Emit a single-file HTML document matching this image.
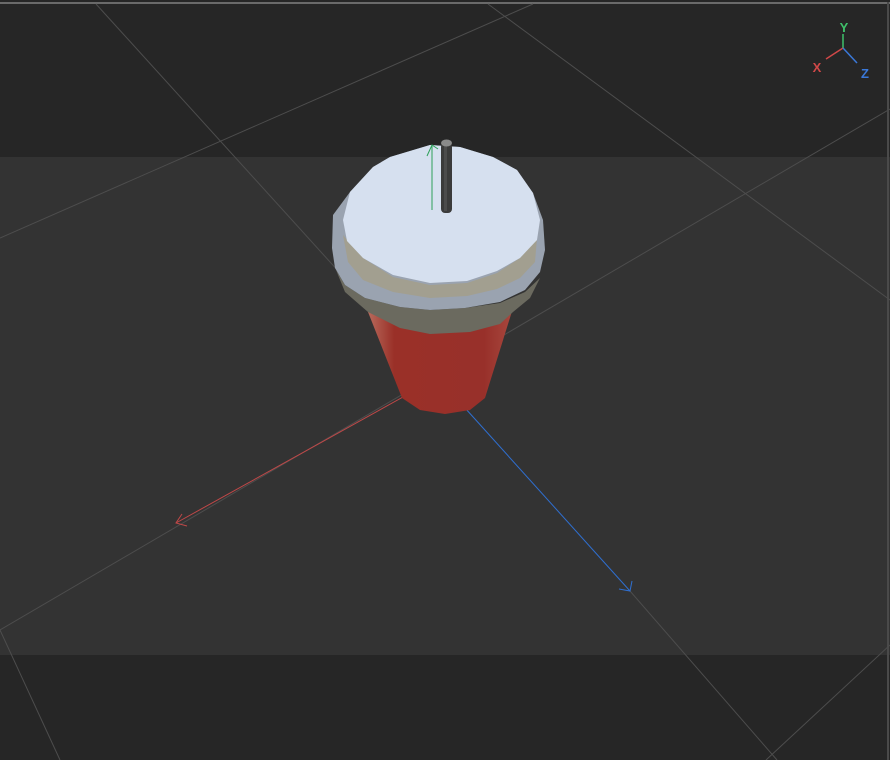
<!DOCTYPE html>
<html><head><style>
html,body{margin:0;padding:0;width:890px;height:760px;overflow:hidden;background:#262626}
svg{display:block}
</style></head><body>
<svg width="890" height="760" xmlns="http://www.w3.org/2000/svg">
<defs>
<linearGradient id="cupg" x1="0" x2="1" y1="0" y2="0">
<stop offset="0" stop-color="#b86a5c"/>
<stop offset="0.18" stop-color="#9a3028"/>
<stop offset="0.8" stop-color="#98302a"/>
<stop offset="1" stop-color="#a8483e"/>
</linearGradient>
</defs>
<rect width="890" height="760" fill="#262626"/>
<rect x="0" y="157" width="890" height="498" fill="#333333"/>
<rect x="0" y="2" width="890" height="2" fill="#6a6a6a"/>
<rect x="887" y="2" width="2" height="758" fill="#4a4a4a"/>
<g stroke="#4d4d4d" stroke-width="1" fill="none">
<line x1="96" y1="4" x2="360" y2="295"/>
<line x1="0" y1="238" x2="533" y2="4"/>
<line x1="488" y1="4" x2="890" y2="300"/>
<line x1="0" y1="630" x2="890" y2="109"/>
<line x1="630" y1="591" x2="777" y2="760"/>
<line x1="0" y1="630" x2="60" y2="760"/>
<line x1="890" y1="645" x2="766" y2="760"/>
</g>
<line x1="403" y1="397" x2="176" y2="523" stroke="#c04848" stroke-width="1"/>
<polyline points="182,514 176,523 187,526" stroke="#c04848" fill="none"/>
<line x1="465" y1="408" x2="630" y2="591" stroke="#2f6fd0" stroke-width="1"/>
<polyline points="619,589 630,591 632,581" stroke="#2f6fd0" fill="none"/>
<!-- cup -->
<polygon points="368,312 513,308 485,398 470,410 445,414 420,410 402,398" fill="url(#cupg)"/>
<polygon points="336,270 345,292 368,312 400,328 430,334 470,332 500,324 513,312 530,298 540,278 525,292 500,303 465,308 430,310 400,307 365,298 345,285" fill="#6b6a5f"/>
<polygon points="333,215 350,192 373,167 390,157 430,145 460,147 493,157 517,170 533,193 543,220 545,250 540,272 525,290 500,302 465,308 430,310 400,307 365,298 345,285 335,268 332,248" fill="#9aa3b0"/>
<polygon points="343,235 363,258 393,277 430,285 467,283 497,273 520,258 537,238 535,262 520,278 497,289 467,296 430,298 393,292 363,280 348,262" fill="#a29f90"/>
<polygon points="350,192 373,167 390,157 430,145 460,147 493,157 517,170 533,193 540,220 537,240 520,258 497,271 467,281 430,283 393,275 363,258 347,241 343,220" fill="#d6e0ef"/>
<rect x="441" y="143" width="11" height="70" rx="4" fill="#3b3b3b"/>
<rect x="444" y="143" width="3" height="68" fill="#4c4c4c"/>
<ellipse cx="446.5" cy="143" rx="5.5" ry="3.5" fill="#8a8a8a"/>
<line x1="432" y1="210" x2="432" y2="146" stroke="#2ea05a" stroke-width="1"/>
<polyline points="427,156 432,145 438,149" stroke="#2ea05a" fill="none"/>
<!-- gizmo -->
<line x1="843" y1="34" x2="843" y2="48" stroke="#3fc06a" stroke-width="1.5"/>
<line x1="843" y1="48" x2="826" y2="59" stroke="#d04848" stroke-width="1.5"/>
<line x1="843" y1="48" x2="857" y2="63" stroke="#3a78d8" stroke-width="1.5"/>
<text x="844" y="32" fill="#3fc06a" font-family="Liberation Sans, sans-serif" font-size="13" font-weight="bold" text-anchor="middle">Y</text>
<text x="817" y="72" fill="#d04848" font-family="Liberation Sans, sans-serif" font-size="13" font-weight="bold" text-anchor="middle">X</text>
<text x="865" y="78" fill="#3a78d8" font-family="Liberation Sans, sans-serif" font-size="13" font-weight="bold" text-anchor="middle">Z</text>
</svg>
</body></html>
